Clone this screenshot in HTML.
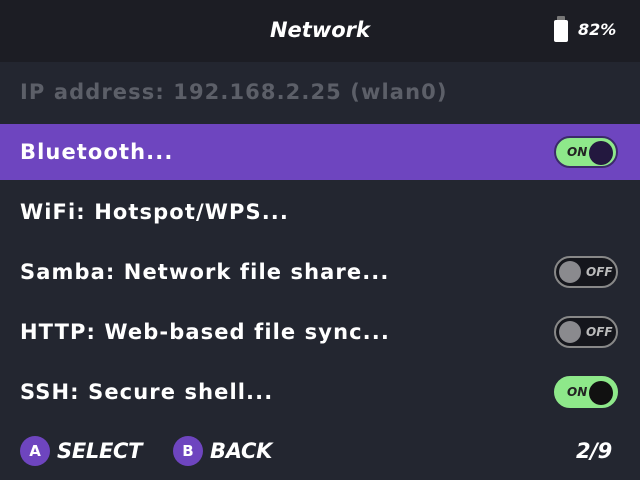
<!DOCTYPE html>
<html><head><style>
body{margin:0;width:640px;height:480px;background:#232630;font-family:"DejaVu Sans","Liberation Sans",sans-serif;overflow:hidden;position:relative;color:#fff}
.hdr{position:absolute;left:0;top:0;width:640px;height:62px;background:#1c1d24}
.title{position:absolute;left:0;width:640px;top:18px;text-align:center;font-weight:bold;font-style:italic;font-size:21px}
.row{position:absolute;left:0;width:640px;height:56px;line-height:56px;font-weight:bold;font-size:21px;letter-spacing:1.1px;padding-left:20px;box-sizing:border-box}
.sel{background:#6e45bf}
.tg{position:absolute;left:554px;width:64px;height:32px;border-radius:17px;box-sizing:border-box;font-style:italic;font-weight:bold;font-size:12px;line-height:28px}
.on{background:#8ee88a;border:2px solid #3b2a6a;color:#222}
.on .k{position:absolute;right:3px;top:3px;width:24px;height:24px;border-radius:50%;background:#111}
.off{background:#15161c;border:2px solid #888;color:#bbb}
.off .k{position:absolute;left:3px;top:3px;width:22px;height:22px;border-radius:50%;background:#8a8a8e}
.btn{position:absolute;top:436px;width:30px;height:30px;border-radius:50%;background:#6e45bf;text-align:center;line-height:30px;font-weight:bold;font-size:15px}
.lbl{position:absolute;top:436px;font-weight:bold;font-style:italic;font-size:21px;line-height:30px;letter-spacing:-0.3px}
</style></head><body>
<div class="hdr"></div>
<div class="title">Network</div>
<div style="position:absolute;left:554px;top:16px;width:14px;height:27px;"><div style="width:8px;height:4px;margin:0 auto;background:#777;border-radius:1px 1px 0 0"></div><div style="width:14px;height:22px;background:#fff;border-radius:2px"></div></div>
<div style="position:absolute;left:578px;top:20px;font-weight:bold;font-style:italic;font-size:16px">82%</div>
<div class="row" style="top:64px;color:#5c5f68">IP address: 192.168.2.25 (wlan0)</div>
<div class="row sel" style="top:124px">Bluetooth...</div>
<div class="tg on" style="top:136px"><span style="position:absolute;left:11px">ON</span><div class="k" style="background:#23183f"></div></div>
<div class="row" style="top:184px">WiFi: Hotspot/WPS...</div>
<div class="row" style="top:244px">Samba: Network file share...</div>
<div class="tg off" style="top:256px"><div class="k"></div><span style="position:absolute;left:30px">OFF</span></div>
<div class="row" style="top:304px">HTTP: Web-based file sync...</div>
<div class="tg off" style="top:316px"><div class="k"></div><span style="position:absolute;left:30px">OFF</span></div>
<div class="row" style="top:364px">SSH: Secure shell...</div>
<div class="tg on" style="top:376px;border-color:#8ee88a"><span style="position:absolute;left:11px">ON</span><div class="k"></div></div>
<div class="btn" style="left:20px">A</div><div class="lbl" style="left:57px">SELECT</div>
<div class="btn" style="left:173px">B</div><div class="lbl" style="left:210px">BACK</div>
<div class="lbl" style="left:576px">2/9</div>
</body></html>
